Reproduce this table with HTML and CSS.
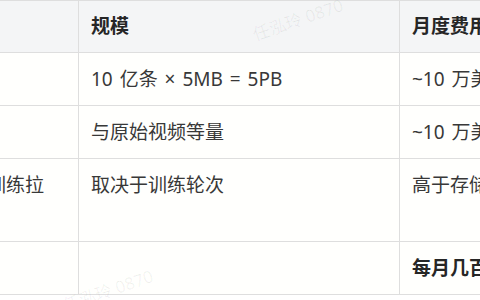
FILE: index.html
```html
<!DOCTYPE html>
<html lang="zh-CN">
<head>
<meta charset="utf-8">
<title>成本表</title>
<link rel="stylesheet" href="styles.css">
</head>
<body>
<div class="page">
  <div class="table">
    <div class="cell head first">项目</div>
    <div class="cell head">规模</div>
    <div class="cell head">月度费用估算</div>

    <div class="cell first">原始视频</div>
    <div class="cell">10 亿条 × 5MB = 5PB</div>
    <div class="cell">~10 万美元</div>

    <div class="cell first">特征数据</div>
    <div class="cell">与原始视频等量</div>
    <div class="cell">~10 万美元</div>

    <div class="cell first">每轮从存储训练拉<br>取数据</div>
    <div class="cell">取决于训练轮次</div>
    <div class="cell">高于存储成本</div>

    <div class="cell first strong">合计</div>
    <div class="cell"></div>
    <div class="cell strong">每月几百万美元</div>
  </div>

  <div class="watermarks" aria-hidden="true">
    <span class="wm wm-a">任泓玲 0870</span>
    <span class="wm wm-b">任泓玲 0870</span>
    <span class="wm wm-c">任泓玲 0870</span>
  </div>
</div>
</body>
</html>
```

FILE: styles.css
```css
html, body {
  margin: 0;
  padding: 0;
  background: #ffffff;
  overflow: hidden;
}

.page {
  position: relative;
  width: 480px;
  height: 300px;
  overflow: hidden;
  font-family: "Noto Sans", "Noto Sans CJK SC", sans-serif;
  font-size: 19px;
  line-height: 30px;
  color: #383838;
}

.table {
  display: grid;
  grid-template-columns: 200px 321px 260px;
  margin-left: -121px;
  width: 781px;
  background: #fffffd;
}

.cell {
  box-sizing: border-box;
  padding: 11px 12px;
  border-right: 1px solid #dedede;
  border-bottom: 1px solid #dedede;
  white-space: nowrap;
  overflow: hidden;
  word-spacing: 2px;
}

.first {
  border-left: 1px solid #dedede;
}

.head {
  padding-top: 10px;
  border-top: 1px solid #dedede;
  background: #f4f5f6;
  font-weight: 700;
  color: #262626;
}

.strong {
  font-weight: 700;
  color: #262626;
}

.watermarks {
  position: absolute;
  inset: 0;
  pointer-events: none;
}

.wm {
  position: absolute;
  transform: translate(-50%, -50%) rotate(-19deg);
  font-family: "Noto Sans", "Noto Sans CJK SC", sans-serif;
  font-size: 17px;
  line-height: 20px;
  white-space: nowrap;
  color: rgba(0, 0, 0, 0.06);
}

.wm-a { left: 298px; top: 20px; }
.wm-b { left: 108px; top: 291px; }
.wm-c { left: 505px; top: 305px; }
```
